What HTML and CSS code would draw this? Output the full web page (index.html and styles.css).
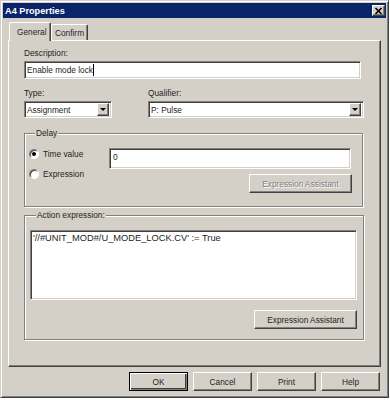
FILE: index.html
```html
<!DOCTYPE html>
<html lang="en">
<head>
    <meta charset="UTF-8">
    <meta name="viewport" content="width=device-width, initial-scale=1.0">
    <title>A4 Properties</title>
    <link rel="stylesheet" href="styles.css">
</head>
<body>
    <div class="window">
        <div class="titlebar">
            <span class="title">A4 Properties</span>
            <span class="close-btn">
                <svg width="9" height="8" viewBox="0 0 9 8">
                    <path d="M1.5 1 L7.5 7 M7.5 1 L1.5 7" stroke="#000" stroke-width="1.6" fill="none"/>
                </svg>
            </span>
        </div>

        <div class="window-body">
            <div class="tabs">
                <div class="tab tab-active">General</div>
                <div class="tab">Confirm</div>
            </div>

            <div class="panel">
                <!-- Description -->
                <div class="field">
                    <label class="label">Description:</label>
                    <div class="textbox textbox-desc"><span>Enable mode lock</span><span class="caret"></span></div>
                </div>

                <!-- Type / Qualifier -->
                <div class="select-row">
                    <div class="field">
                        <label class="label">Type:</label>
                        <div class="combo">
                            <span class="combo-value">Assignment</span>
                            <span class="combo-btn"><span class="arrow"></span></span>
                        </div>
                    </div>
                    <div class="field">
                        <label class="label">Qualifier:</label>
                        <div class="combo">
                            <span class="combo-value">P: Pulse</span>
                            <span class="combo-btn"><span class="arrow"></span></span>
                        </div>
                    </div>
                </div>

                <!-- Delay group -->
                <fieldset class="group group-delay">
                    <legend>Delay</legend>
                    <div class="delay-body">
                        <div class="radios">
                            <div class="radio-row"><span class="radio radio-checked"></span>Time value</div>
                            <div class="radio-row"><span class="radio"></span>Expression</div>
                        </div>
                        <div class="delay-right">
                            <div class="textbox textbox-time">0</div>
                            <button class="btn btn-assist btn-disabled">Expression Assistant</button>
                        </div>
                    </div>
                </fieldset>

                <!-- Action expression group -->
                <fieldset class="group group-action">
                    <legend>Action expression:</legend>
                    <div class="textbox textarea">'//#UNIT_MOD#/U_MODE_LOCK.CV' := True</div>
                    <div class="btn-row">
                        <button class="btn btn-assist">Expression Assistant</button>
                    </div>
                </fieldset>
            </div>

            <div class="footer">
                <button class="btn btn-dialog btn-default">OK</button>
                <button class="btn btn-dialog">Cancel</button>
                <button class="btn btn-dialog">Print</button>
                <button class="btn btn-dialog">Help</button>
            </div>
        </div>
    </div>
</body>
</html>
```

FILE: styles.css
```css
/* Classic Windows dialog */

* {
    box-sizing: border-box;
}

body {
    margin: 0;
    padding: 0;
    background-color: #ffffff;
    font-family: 'Liberation Sans', Arial, sans-serif;
    font-size: 8.3px;
    color: #1e1e1e;
}

.window {
    width: 389px;
    height: 398px;
    background-color: #d4d0c8;
    border: 1px solid;
    border-color: #d4d0c8 #404040 #404040 #d4d0c8;
    box-shadow: inset 1px 1px #ffffff, inset -1px -1px #808080;
    padding: 2px;
    display: flex;
    flex-direction: column;
}

.titlebar {
    height: 15px;
    background-color: #0a246a;
    display: flex;
    align-items: center;
    justify-content: space-between;
    padding: 0 1px 0 2px;
}

.title {
    color: #ffffff;
    font-weight: bold;
    font-size: 9.2px;
}

.close-btn {
    width: 13px;
    height: 11px;
    background-color: #d4d0c8;
    border: 1px solid;
    border-color: #ffffff #404040 #404040 #ffffff;
    box-shadow: inset -1px -1px #808080;
    display: flex;
    align-items: center;
    justify-content: center;
}

.window-body {
    padding: 0 4px 0 5px;
}

/* Tabs */

.tabs {
    display: flex;
    align-items: flex-end;
    height: 18px;
    margin-top: 4px;
    padding-left: 1px;
}

.tab {
    height: 16px;
    padding: 0 3px;
    display: flex;
    align-items: center;
    border: 1px solid;
    border-bottom: none;
    border-color: #ffffff #404040 #404040 #ffffff;
    box-shadow: inset -1px 0 #808080;
    border-radius: 2px 2px 0 0;
    background-color: #d4d0c8;
}

.tab-active {
    width: 42px;
    height: 19px;
    margin-bottom: -1px;
    padding-left: 7px;
    position: relative;
    z-index: 1;
}

.panel {
    width: 373px;
    height: 327px;
    border: 1px solid;
    border-color: #ffffff #404040 #404040 #ffffff;
    box-shadow: inset -1px -1px #808080;
    padding: 7px 0 0 15px;
}

.label {
    display: block;
    line-height: 10px;
    height: 10px;
}

/* Text inputs */

.textbox {
    background-color: #ffffff;
    border: 1px solid;
    border-color: #808080 #ffffff #ffffff #808080;
    box-shadow: inset 1px 1px #404040, inset -1px -1px #d4d0c8;
}

.textbox-desc {
    width: 337px;
    height: 18px;
    margin-top: 3px;
    display: flex;
    align-items: center;
    padding-left: 2px;
}

.caret {
    width: 1px;
    height: 12px;
    background-color: #000;
}

.select-row {
    display: flex;
    gap: 36px;
    margin-top: 9px;
}

.select-row .field:first-child .combo {
    width: 88px;
}

.select-row .field:last-child .combo {
    width: 216px;
}

.combo {
    height: 17px;
    margin-top: 3px;
    background-color: #ffffff;
    border: 1px solid;
    border-color: #808080 #ffffff #ffffff #808080;
    box-shadow: inset 1px 1px #404040, inset -1px -1px #d4d0c8;
    display: flex;
    align-items: center;
    justify-content: space-between;
    padding: 2px 2px 2px 2px;
}

.combo-btn {
    width: 12px;
    height: 13px;
    background-color: #d4d0c8;
    border: 1px solid;
    border-color: #ffffff #404040 #404040 #ffffff;
    box-shadow: inset -1px -1px #808080;
    display: flex;
    align-items: center;
    justify-content: center;
}

.arrow {
    width: 0;
    height: 0;
    border-left: 3px solid transparent;
    border-right: 3px solid transparent;
    border-top: 3px solid #000;
}

/* Group boxes */

.group {
    margin: 0;
    padding: 0;
    border: 1px solid #808080;
    box-shadow: inset 1px 1px #ffffff, 1px 1px #ffffff;
}

.group legend {
    margin-left: 6px;
    padding: 0 1px;
    line-height: 10px;
    background-color: #d4d0c8;
}

.group-delay {
    width: 339px;
    margin-top: 10px;
    padding: 10px 10px 13px 4px;
}

.delay-body {
    display: flex;
}

.radios {
    width: 80px;
    display: flex;
    flex-direction: column;
    gap: 8px;
}

.radio-row {
    height: 12px;
    display: flex;
    align-items: center;
    gap: 4px;
}

.radio {
    width: 10px;
    height: 10px;
    border-radius: 50%;
    background-color: #ffffff;
    border: 1px solid;
    border-color: #808080 #ffffff #ffffff #808080;
    box-shadow: inset 1px 1px #404040;
    display: flex;
    align-items: center;
    justify-content: center;
}

.radio-checked::after {
    content: "";
    width: 4px;
    height: 4px;
    border-radius: 50%;
    background-color: #000;
}

.delay-right {
    display: flex;
    flex-direction: column;
    align-items: flex-end;
}

.textbox-time {
    width: 242px;
    height: 21px;
    padding: 3px 3px;
    line-height: 10px;
    align-self: flex-start;
}

.btn {
    font-family: 'Liberation Sans', Arial, sans-serif;
    font-size: 8.3px;
    color: #1e1e1e;
    background-color: #d4d0c8;
    border: 1px solid;
    border-color: #ffffff #404040 #404040 #ffffff;
    box-shadow: inset -1px -1px #808080;
    padding: 0;
    margin: 0;
}

.btn-assist {
    width: 103px;
    height: 19px;
}

.delay-right .btn-assist {
    margin-top: 5px;
    margin-right: -1px;
}

.btn-disabled {
    color: #808080;
    text-shadow: 1px 1px #ffffff;
}

.group-action {
    width: 340px;
    margin-top: 3px;
    padding: 10px 6px 10px 5px;
}

.textarea {
    width: 327px;
    height: 70px;
    padding: 2px 2px;
    font-size: 9.3px;
    line-height: 11px;
}

.btn-row {
    display: flex;
    justify-content: flex-end;
    margin-top: 10px;
}

/* Dialog buttons */

.footer {
    display: flex;
    justify-content: flex-end;
    gap: 5px;
    margin-top: 5px;
    padding-right: 2px;
}

.btn-dialog {
    width: 59px;
    height: 19px;
}

.btn-default {
    border: 1px solid #000;
    box-shadow: inset 1px 1px #ffffff, inset -1px -1px #808080, inset -2px -2px #404040;
}
```
